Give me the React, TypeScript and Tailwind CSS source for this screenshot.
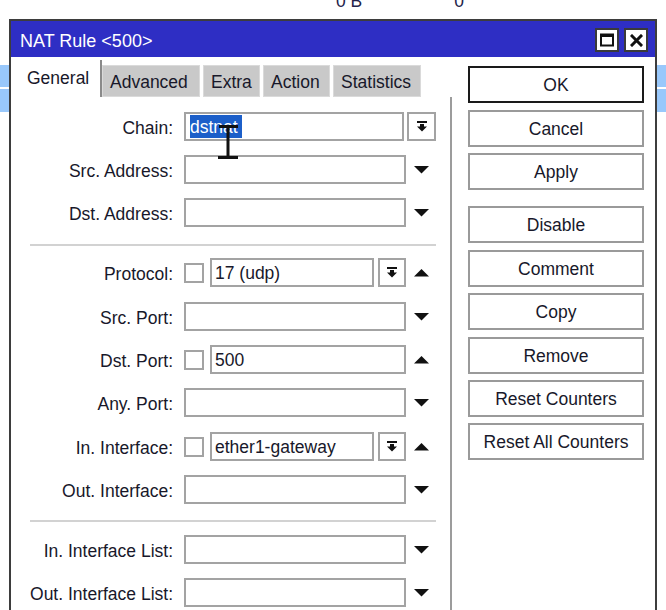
import React from "react";

const sans = "font-['Liberation_Sans',Arial,sans-serif]";

function TriDown() {
  return (
    <svg width="15" height="8" viewBox="0 0 15 8">
      <polygon points="0,0 15,0 7.5,7.5" fill="#111" />
    </svg>
  );
}

function TriUp() {
  return (
    <svg width="15" height="8" viewBox="0 0 15 8">
      <polygon points="7.5,0 15,7.5 0,7.5" fill="#111" />
    </svg>
  );
}

// combobox drop button: bar on top, bold arrow underneath
function ComboButton({ w }: { w: string }) {
  return (
    <div className={`flex h-full ${w} shrink-0 items-center justify-center border-2 border-[#a3a3a3] bg-white`}>
      <svg width="10" height="11" viewBox="0 0 10 11">
        <rect x="0" y="0" width="10" height="2" fill="#111" />
        <rect x="3" y="3" width="4" height="3" fill="#111" />
        <polygon points="0,5.5 10,5.5 5,10.5" fill="#111" />
      </svg>
    </div>
  );
}

function Field({ children, className = "flex-1" }: { children?: React.ReactNode; className?: string }) {
  return (
    <div className={`flex h-full items-center border-2 border-[#a3a3a3] bg-white pl-[3px] pt-[2px] ${className}`}>
      {children}
    </div>
  );
}

function Check() {
  return <div className="h-[20px] w-[20px] shrink-0 border-2 border-[#a3a3a3] bg-white" />;
}

function Row({
  label,
  mt,
  arrow,
  children,
}: {
  label: string;
  mt: string;
  arrow?: React.ReactNode;
  children: React.ReactNode;
}) {
  return (
    <div className={`flex h-[29px] items-center ${mt}`}>
      <div className="w-[162px] whitespace-nowrap pt-[3px] text-right">{label}</div>
      <div className="ml-[11px] flex h-full w-[222px] items-center">{children}</div>
      <div className="flex h-full w-[30px] items-center justify-center">{arrow}</div>
    </div>
  );
}

function Separator({ mt }: { mt: string }) {
  return <div className={`ml-[19px] h-[2px] w-[406px] bg-[#d2d2d2] ${mt}`} />;
}

function ActionButton({ label, mt, primary }: { label: string; mt: string; primary?: boolean }) {
  return (
    <div
      className={`flex h-[37px] w-[176px] items-center justify-center border-2 bg-white pt-[2px] ${
        primary ? "border-[#1a1a1a]" : "border-[#9a9a9a]"
      } ${mt}`}
    >
      {label}
    </div>
  );
}

function Tab({ label, w, active }: { label: string; w: string; active?: boolean }) {
  if (active) {
    return (
      <div className={`flex h-[37px] ${w} items-center border-r-2 border-[#8a8a8a] bg-white pl-[9px]`}>
        {label}
      </div>
    );
  }
  return (
    <div className={`flex h-[32px] ${w} items-center border border-[#dadada] bg-[#c9c9c9] pl-[7px] pt-[2px]`}>
      {label}
    </div>
  );
}

export default function App() {
  return (
    <div className={`relative h-[610px] w-[666px] overflow-hidden bg-white text-[17.5px] text-[#18182a] ${sans}`}>
      {/* list behind the dialog */}
      <div className="flex flex-col">
        <div className="h-[19px] overflow-hidden">
          <div className="-mt-[7px] flex leading-[17px] text-[#23234a]">
            <span className="ml-[336px]">0 B</span>
            <span className="ml-[92px]">0</span>
          </div>
        </div>
        <div className="mt-[46px] h-[22px] bg-[#99c8fb]" />
        <div className="mt-[2px] h-[23px] bg-[#99c8fb]" />
      </div>

      {/* NAT rule window */}
      <div className="absolute left-[9px] top-[19px] flex h-[600px] w-[648px] flex-col border-2 border-b-0 border-[#3d3d3d] bg-white">
        <div className="flex h-[36px] shrink-0 items-center justify-between bg-[#2e2ec4] pl-[9px] pr-[7px]">
          <span className="mt-[5px] text-[18px] text-white">NAT Rule &lt;500&gt;</span>
          <div className="mt-[2px] flex gap-[5px]">
            <div className="flex h-[24px] w-[24px] items-center justify-center border-2 border-[#3a3a3a] bg-white">
              <svg width="14" height="14" viewBox="0 0 14 14">
                <rect x="1" y="1.5" width="12" height="11" fill="none" stroke="#111" strokeWidth="2" />
                <rect x="1" y="1" width="12" height="3" fill="#111" />
              </svg>
            </div>
            <div className="flex h-[24px] w-[24px] items-center justify-center border-2 border-[#3a3a3a] bg-white">
              <svg width="13" height="13" viewBox="0 0 13 13">
                <path d="M2 2 L11 11 M11 2 L2 11" stroke="#111" strokeWidth="3" strokeLinecap="square" />
              </svg>
            </div>
          </div>
        </div>

        <div className="flex flex-1">
          {/* tabs + general page */}
          <div className="flex w-[441px] flex-col">
            <div className="flex h-[40px] items-end pl-[7px]">
              <Tab label="General" w="w-[84px]" active />
              <Tab label="Advanced" w="w-[98px]" />
              <div className="w-[3px]" />
              <Tab label="Extra" w="w-[57px]" />
              <div className="w-[3px]" />
              <Tab label="Action" w="w-[67px]" />
              <div className="w-[3px]" />
              <Tab label="Statistics" w="w-[88px]" />
            </div>

            <div className="relative flex flex-1 flex-col border-r-2 border-[#9c9c9c] pt-[15px]">
              <Row
                label="Chain:"
                mt="mt-0"
                arrow={
                  <div className="ml-[1px] h-full">
                    <ComboButton w="w-[29px]" />
                  </div>
                }
              >
                <Field className="w-[220px]">
                  <span className="-mt-[2px] ml-[1px] bg-[#1c5fc9] pr-[4px] pt-[1px] leading-[22px] text-white">
                    dstnat
                  </span>
                </Field>
              </Row>
              <Row label="Src. Address:" mt="mt-[14px]" arrow={<TriDown />}>
                <Field />
              </Row>
              <Row label="Dst. Address:" mt="mt-[14px]" arrow={<TriDown />}>
                <Field />
              </Row>

              <Separator mt="mt-[17px]" />

              <Row label="Protocol:" mt="mt-[12px]" arrow={<TriUp />}>
                <Check />
                <Field className="ml-[6px] flex-1">17 (udp)</Field>
                <div className="ml-[4px] h-full">
                  <ComboButton w="w-[28px]" />
                </div>
              </Row>
              <Row label="Src. Port:" mt="mt-[15px]" arrow={<TriDown />}>
                <Field />
              </Row>
              <Row label="Dst. Port:" mt="mt-[14px]" arrow={<TriUp />}>
                <Check />
                <Field className="ml-[6px] flex-1">500</Field>
              </Row>
              <Row label="Any. Port:" mt="mt-[14px]" arrow={<TriDown />}>
                <Field />
              </Row>
              <Row label="In. Interface:" mt="mt-[15px]" arrow={<TriUp />}>
                <Check />
                <Field className="ml-[6px] flex-1">ether1-gateway</Field>
                <div className="ml-[4px] h-full">
                  <ComboButton w="w-[28px]" />
                </div>
              </Row>
              <Row label="Out. Interface:" mt="mt-[14px]" arrow={<TriDown />}>
                <Field />
              </Row>

              <Separator mt="mt-[16px]" />

              <Row label="In. Interface List:" mt="mt-[13px]" arrow={<TriDown />}>
                <Field />
              </Row>
              <Row label="Out. Interface List:" mt="mt-[14px]" arrow={<TriDown />}>
                <Field />
              </Row>

              {/* text cursor resting on the chain field */}
              <svg className="absolute left-[205px] top-[28px]" width="24" height="36" viewBox="0 0 24 36">
                <rect x="3" y="0" width="19" height="3" fill="#111" />
                <rect x="10.5" y="0" width="3" height="33" fill="#111" />
                <rect x="2" y="31" width="20" height="3" fill="#111" />
              </svg>
            </div>
          </div>

          {/* dialog buttons */}
          <div className="flex flex-col pl-[16px] pt-[9px]">
            <ActionButton label="OK" mt="mt-0" primary />
            <ActionButton label="Cancel" mt="mt-[7px]" />
            <ActionButton label="Apply" mt="mt-[6px]" />
            <ActionButton label="Disable" mt="mt-[16px]" />
            <ActionButton label="Comment" mt="mt-[7px]" />
            <ActionButton label="Copy" mt="mt-[6px]" />
            <ActionButton label="Remove" mt="mt-[7px]" />
            <ActionButton label="Reset Counters" mt="mt-[6px]" />
            <ActionButton label="Reset All Counters" mt="mt-[6px]" />
          </div>
        </div>
      </div>
    </div>
  );
}
